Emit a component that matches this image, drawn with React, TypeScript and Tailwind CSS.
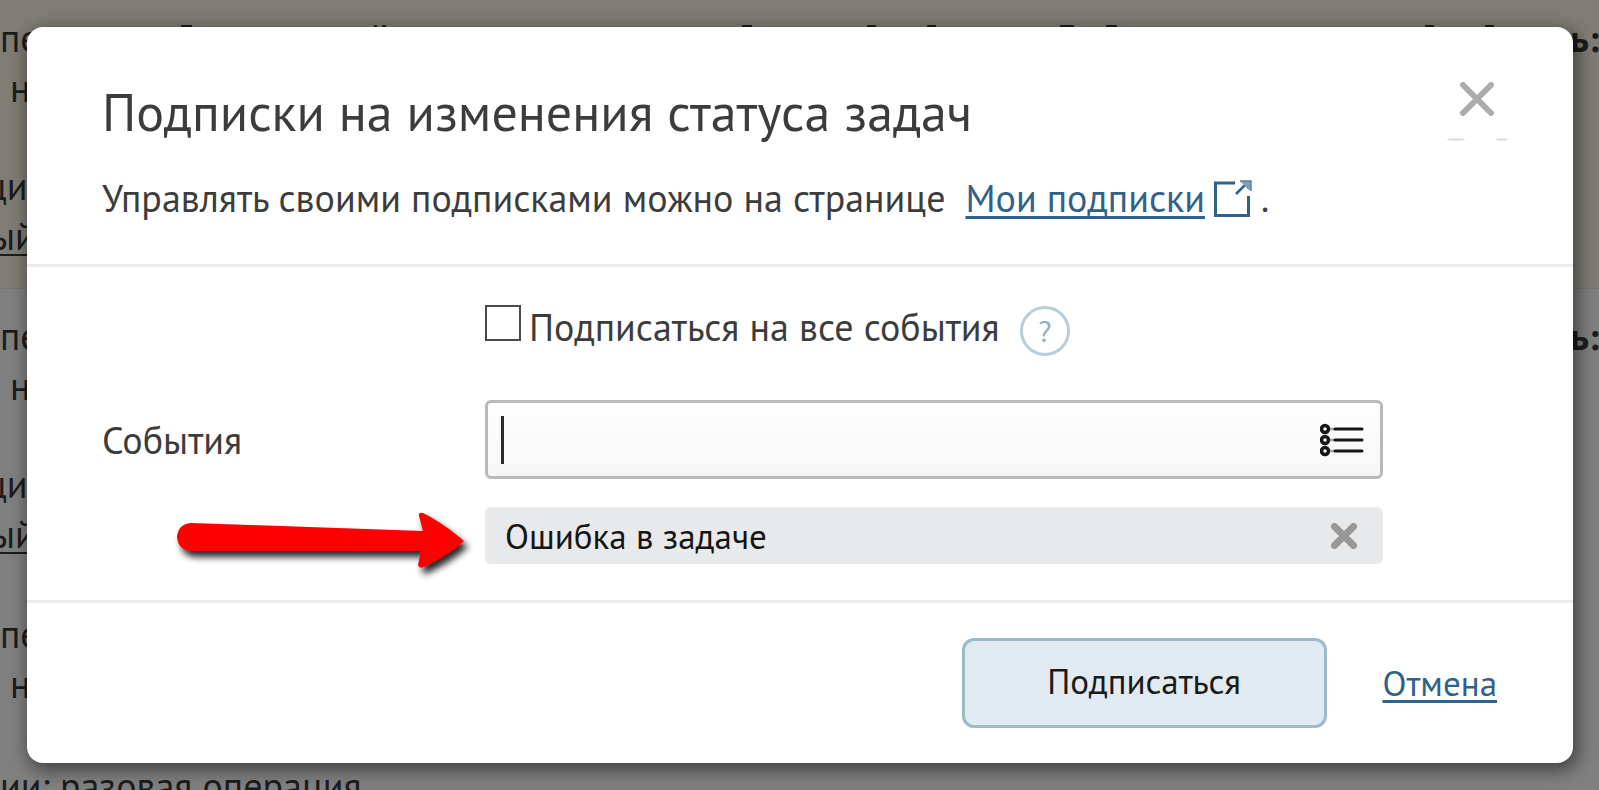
import { useState } from "react";

const backdropGroups = [
  { id: "first", tone: "bg-[#7f7d75] border-b border-[#767676]" },
  { id: "second", tone: "bg-[#808080]" },
  { id: "third", tone: "bg-[#808080]" },
];

// Tops of the letters that stick out above the dialog
const letterTops = [
  { x: 181, w: 11 },
  { x: 374, w: 3 },
  { x: 382, w: 4 },
  { x: 742, w: 10 },
  { x: 867, w: 9 },
  { x: 927, w: 9 },
  { x: 1060, w: 14 },
  { x: 1106, w: 11 },
  { x: 1425, w: 9 },
  { x: 1485, w: 9 },
];

function Backdrop() {
  return (
    <div aria-hidden="true" className="absolute inset-0 overflow-hidden bg-[#808080] text-[38px] text-[#1c1c1c]">
      {backdropGroups.map((group, index) => (
        <div key={group.id} className={`flex h-[298px] justify-between first:h-[289px] ${group.tone}`}>
          <div className={index === 0 ? "pt-[13px]" : "pt-[22px]"}>
            <p className="leading-[50px]">пе</p>
            <p className="pl-[10px] leading-[50px]">н</p>
            {index < 2 && (
              <>
                <p className="-ml-[14px] mt-12 leading-[50px]">ци</p>
                <p className="-ml-[10px] leading-[50px] underline decoration-2 underline-offset-4">ый</p>
              </>
            )}
          </div>
          {index < 2 && (
            <p className={`font-bold leading-[50px] ${index === 0 ? "pt-[13px]" : "pt-[22px]"}`}>ь:</p>
          )}
        </div>
      ))}
      <p className="absolute top-[761px] left-0 leading-[50px] whitespace-nowrap">ии: разовая операция</p>
      <svg className="absolute top-6 left-0" width="1599" height="4" fill="#1c1c1c">
        {letterTops.map((top) => (
          <rect key={top.x} x={top.x} y="1" width={top.w} height="3" rx="1" />
        ))}
      </svg>
    </div>
  );
}

function Cross({ size, stroke, color }: { size: number; stroke: number; color: string }) {
  return (
    <svg width={size} height={size} viewBox={`0 0 ${size} ${size}`} stroke={color} strokeWidth={stroke} strokeLinecap="round">
      <path d={`M${stroke / 2} ${stroke / 2}L${size - stroke / 2} ${size - stroke / 2}M${size - stroke / 2} ${stroke / 2}L${stroke / 2} ${size - stroke / 2}`} />
    </svg>
  );
}

function ExternalIcon() {
  return (
    <svg width="40" height="40" viewBox="0 0 40 40" fill="none" stroke="#2f6189" strokeWidth="3">
      <path d="M22 5H2.5V37.500H35.500V18" />
      <path d="M23 16L34 5" strokeWidth="2.500" />
      <path d="M27 3H38V13L34.500 11L30 6Z" fill="#7f9fb9" stroke="none" />
      <path d="M27 3H38V13" strokeWidth="1.500" stroke="#5a84a5" />
    </svg>
  );
}

function ListIcon() {
  return (
    <svg width="44" height="34" viewBox="0 0 44 34" fill="none" stroke="#161616">
      {[6, 17, 28].map((y) => (
        <g key={y}>
          <circle cx="5" cy={y} r="3.500" strokeWidth="3.500" />
          <path d={`M10 ${y}H14`} stroke="#a0a0a0" strokeWidth="2.500" />
          <path d={`M15 ${y}H42`} strokeWidth="3" strokeLinecap="round" />
        </g>
      ))}
    </svg>
  );
}

function Arrow() {
  return (
    <svg className="absolute top-[479px] left-[144px]" width="312" height="76" viewBox="0 0 312 76" aria-hidden="true">
      <defs>
        <filter id="arrow-shadow" x="-10%" y="-30%" width="125%" height="170%">
          <feDropShadow dx="4" dy="6" stdDeviation="3.500" floodColor="#000" floodOpacity="0.85" />
        </filter>
      </defs>
      <path
        d="M20 17Q7 18 6 31Q7 44 20 45L250 45L247 59Q248 63 253 61C266 55 282 45 293 35C282 25 266 14 252 7Q247 6 248 10L252 25Z"
        fill="#fe0000"
        filter="url(#arrow-shadow)"
      />
    </svg>
  );
}

export default function App() {
  const [all, setAll] = useState(false);
  const [query, setQuery] = useState("");
  const [events, setEvents] = useState(["Ошибка в задаче"]);

  return (
    <div className="relative min-h-screen overflow-hidden pt-[27px] pr-[26px] pb-7 pl-[27px] font-['PT_Sans','Noto_Sans',sans-serif] text-[#3c3c3c]">
      <Backdrop />

      <div
        role="dialog"
        aria-labelledby="dialog-title"
        className="relative rounded-2xl bg-white shadow-[3px_5px_18px_2px_rgba(0,0,0,0.5)]"
      >
        <header className="border-b-3 border-[#ececec] px-[75px] pt-[53px] pb-[42px]">
          <div className="flex items-start justify-between">
            <h1 id="dialog-title" className="text-[52px] leading-[64px]">Подписки на изменения статуса задач</h1>
            <button type="button" aria-label="Закрыть" className="mt-[2px] flex flex-col items-center">
              <Cross size={34} stroke={6} color="#acacac" />
              <svg className="-mr-3 mt-[22px] -ml-3" width="66" height="3" fill="#d3dad8">
                <ellipse cx="12" cy="1.500" rx="9" ry="1" />
                <ellipse cx="58" cy="1.500" rx="6" ry="1" />
              </svg>
            </button>
          </div>
          <p className="mt-[30px] flex items-center text-[38px] leading-[48px]">
            <span>Управлять своими подписками можно на странице</span>
            <a href="#subscriptions" className="ml-5 flex items-center gap-2 text-[#2f6189]">
              <span className="underline decoration-3 underline-offset-4 [text-decoration-skip-ink:none]">Мои подписки</span>
              <ExternalIcon />
            </a>
            <span className="ml-2">.</span>
          </p>
        </header>

        <form id="subscribe" className="grid grid-cols-[383px_minmax(0,898px)] border-b-3 border-[#ececec] pt-[31px] pb-[36px] pl-[75px] text-[38px] leading-[48px]">
          <div className="col-start-2 flex items-center">
            <input
              id="all"
              type="checkbox"
              checked={all}
              onChange={(e) => setAll(e.target.checked)}
              className="-mt-2 size-9 appearance-none border-2 border-[#4a4a4a] bg-white checked:bg-[#2f6189]"
            />
            <label htmlFor="all" className="ml-2">Подписаться на все события</label>
            <button type="button" aria-label="Справка" className="mt-2 ml-5 flex size-[50px] items-center justify-center rounded-full border-3 border-[#b9ced9] text-3xl text-[#8fb0c6]">
              ?
            </button>
          </div>

          <label htmlFor="events" className="mt-11 self-center">События</label>
          <div className="mt-11 flex h-[79px] items-center rounded-md border-3 border-[#b9b9b9] bg-linear-to-b from-white to-[#f6f6f6] pr-4 pl-[13px]">
            <span className="h-12 w-[3px] bg-[#2b2b2b]" />
            <input
              id="events"
              type="text"
              value={query}
              onChange={(e) => setQuery(e.target.value)}
              className="min-w-0 flex-1 bg-transparent px-1 outline-none"
            />
            <button type="button" aria-label="Выбрать из списка">
              <ListIcon />
            </button>
          </div>

          <ul className="col-start-2 mt-7">
            {events.map((event) => (
              <li key={event} className="flex h-[57px] items-center justify-between rounded-md bg-[#e8e9ea] pr-[26px] pl-5 text-[35px] text-[#151515]">
                {event}
                <button type="button" aria-label="Удалить" onClick={() => setEvents(events.filter((e) => e !== event))}>
                  <Cross size={26} stroke={7} color="#989898" />
                </button>
              </li>
            ))}
          </ul>
        </form>

        <footer className="flex items-center justify-end gap-14 pt-[35px] pr-[76px] pb-[35px] text-[35px]">
          <button type="submit" form="subscribe" className="h-[90px] w-[365px] rounded-xl border-3 border-[#9cbaca] bg-[#e1e9f1] pb-1 text-[#1a1a1a]">
            Подписаться
          </button>
          <a href="#cancel" className="text-[#2f6189] underline decoration-3 underline-offset-4">Отмена</a>
        </footer>

        <Arrow />
      </div>
    </div>
  );
}
